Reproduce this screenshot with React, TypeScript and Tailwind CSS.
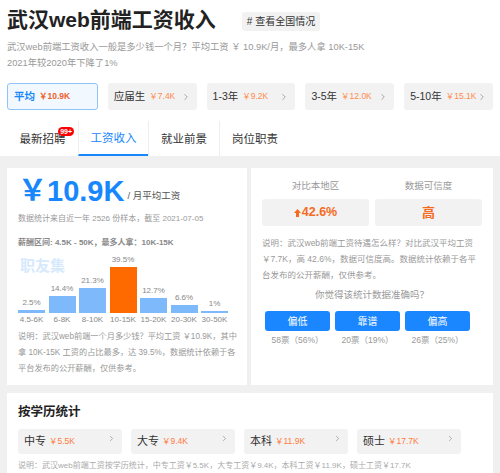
import { ChevronRight } from 'lucide-react';

const levels = [
  { name: '平均', pay: '￥10.9K', active: true },
  { name: '应届生', pay: '￥7.4K' },
  { name: '1-3年', pay: '￥9.2K' },
  { name: '3-5年', pay: '￥12.0K' },
  { name: '5-10年', pay: '￥15.1K' },
];

const bars = [
  { label: '4.5-6K', pct: 2.5 },
  { label: '6-8K', pct: 14.4 },
  { label: '8-10K', pct: 21.3 },
  { label: '10-15K', pct: 39.5, top: true },
  { label: '15-20K', pct: 12.7 },
  { label: '20-30K', pct: 6.6 },
  { label: '30-50K', pct: 1 },
];

const votes = [
  { text: '偏低', count: '58票（56%）' },
  { text: '靠谱', count: '20票（19%）' },
  { text: '偏高', count: '26票（25%）' },
];

const degrees = [
  { name: '中专', pay: '￥5.5K' },
  { name: '大专', pay: '￥9.4K' },
  { name: '本科', pay: '￥11.9K' },
  { name: '硕士', pay: '￥17.7K' },
];

export default function App() {
  return (
    <div className="w-[500px] h-[473px] overflow-hidden bg-[#f0f0f0] text-[#333] font-['Liberation_Sans','Noto_Sans_CJK_SC',sans-serif]">
      {/* Header */}
      <div className="bg-white px-[7px] pt-[5px]">
        <div className="flex items-center">
          <h1 className="text-[21px] leading-[30px] font-bold text-[#222]">武汉web前端工资收入</h1>
          <span className="ml-[26px] mt-[2px] bg-[#f2f2f2] rounded-[3px] px-[5px] h-[19px] leading-[19px] text-[10px] text-[#333]">
            # 查看全国情况
          </span>
        </div>
        <p className="mt-[4px] text-[9.3px] leading-[16px] text-[#999] whitespace-nowrap">
          武汉web前端工资收入一般是多少钱一个月？平均工资 ￥ 10.9K/月，最多人拿 10K-15K
        </p>
        <p className="text-[9.3px] leading-[16px] text-[#999]">2021年较2020年下降了1%</p>

        <div className="mt-[12px] flex gap-[10px]">
          {levels.map((l) => (
            <div
              key={l.name}
              className={`flex-1 h-[27px] rounded-[3px] flex items-center px-[6px] whitespace-nowrap ${
                l.active ? 'bg-[#f2f8ff] border border-[#8fc3fb]' : 'bg-[#f2f2f2]'
              }`}
            >
              <span className={`text-[10.5px] ${l.active ? 'text-[#1787fb] font-bold' : 'text-[#333]'}`}>{l.name}</span>
              <span className={`ml-[4px] text-[8.5px] ${l.active ? 'text-[#f0602a] font-bold' : 'text-[#ff8a4c]'}`}>{l.pay}</span>
              {!l.active && <ChevronRight className="ml-auto w-[10px] h-[10px] text-[#999]" />}
            </div>
          ))}
        </div>

        {/* Nav tabs */}
        <div className="mt-[11px] flex h-[35px]">
          <div className="relative w-[71px] flex items-center justify-center pt-[2px] text-[11.5px] text-[#333]">
            最新招聘
            <span className="absolute top-[6px] right-[4px] bg-[#f00] text-white text-[7px] leading-[9px] px-[2px] rounded-full font-bold">
              99+
            </span>
          </div>
          <div className="w-[70px] flex items-center justify-center pt-[2px] text-[11.5px] text-[#1787fb] border-l border-[#eee] border-b-2 border-b-[#1787fb]">
            工资收入
          </div>
          <div className="w-[71px] flex items-center justify-center pt-[2px] text-[11.5px] text-[#333] border-l border-[#eee]">
            就业前景
          </div>
          <div className="w-[71px] flex items-center justify-center pt-[2px] text-[11.5px] text-[#333] border-l border-[#eee]">
            岗位职责
          </div>
        </div>
      </div>

      {/* Salary section */}
      <div className="px-[7px] pt-[12px] flex gap-[4px]">
        <div className="w-[240px] bg-white pl-[11px] pr-[8px] pt-[7px] pb-[8px]">
          <div className="flex items-end">
            <span className="text-[29px] leading-[32px] font-bold text-[#1787fb]">￥10.9K</span>
            <span className="ml-[3px] mb-[4px] text-[9.5px] text-[#555]">/ 月平均工资</span>
          </div>
          <p className="mt-[5px] text-[8px] leading-[14px] text-[#999] whitespace-nowrap">数据统计来自近一年 2526 份样本，截至 2021-07-05</p>
          <p className="mt-[10px] text-[8px] leading-[14px] font-bold text-[#888] whitespace-nowrap">薪酬区间: 4.5K - 50K，最多人拿：10K-15K</p>

          <div className="relative mt-[4px]">
            <span className="absolute left-[2px] top-[3px] text-[15px] leading-[18px] font-bold text-[#d6e9fd]">职友集</span>
            <div className="flex gap-[3.5px] items-end">
              {bars.map((b) => (
                <div key={b.label} className="w-[27px] flex flex-col items-center">
                  <span className="text-[8px] leading-[11px] text-[#888] mb-[2px] whitespace-nowrap">{b.pct}%</span>
                  <div
                    className={`w-full ${b.top ? 'bg-[#ff6a00]' : 'bg-[#7db9fb]'}`}
                    style={{ height: Math.max(2, Math.round(b.pct * 1.17)) }}
                  />
                </div>
              ))}
            </div>
            <div className="flex gap-[3.5px] mt-[1px]">
              {bars.map((b) => (
                <span key={b.label} className="w-[27px] text-center text-[8px] leading-[12px] text-[#888] whitespace-nowrap">
                  {b.label}
                </span>
              ))}
            </div>
          </div>

          <p className="mt-[3px] text-[8.2px] leading-[16px] text-[#999]">
            说明：武汉web前端一个月多少钱？平均工资 ￥10.9K，其中拿 10K-15K 工资的占比最多，达 39.5%，数据统计依赖于各平台发布的公开薪酬，仅供参考。
          </p>
        </div>

        <div className="flex-1 bg-white px-[11px] pt-[11px]">
          <div className="flex gap-[6px]">
            <div className="flex-1">
              <p className="text-center text-[9.5px] leading-[14px] text-[#999]">对比本地区</p>
              <div className="mt-[6px] h-[27px] bg-[#f2f2f2] rounded-[3px] flex items-center justify-center text-[12.5px] font-bold text-[#f56a1e]">
                <svg width="7" height="8" viewBox="0 0 7 8" className="mr-[1px]">
                  <path d="M3.5 0 L7 4 L5 4 L5 8 L2 8 L2 4 L0 4 Z" fill="#f56a1e" />
                </svg>
                42.6%
              </div>
            </div>
            <div className="flex-1">
              <p className="text-center text-[9.5px] leading-[14px] text-[#999]">数据可信度</p>
              <div className="mt-[6px] h-[27px] bg-[#f2f2f2] rounded-[3px] flex items-center justify-center text-[13px] font-bold text-[#f56a1e]">
                高
              </div>
            </div>
          </div>
          <p className="mt-[9px] text-[8.5px] leading-[16px] text-[#999]">
            说明：武汉web前端工资待遇怎么样？对比武汉平均工资 ￥7.7K，高 42.6%，数据可信度高。数据统计依赖于各平台发布的公开薪酬，仅供参考。
          </p>
          <p className="mt-[5px] text-center text-[9.5px] leading-[14px] text-[#999]">你觉得该统计数据准确吗？</p>
          <div className="mt-[9px] pl-[3px] flex gap-[5px]">
            {votes.map((v) => (
              <div key={v.text} className="w-[65px] flex flex-col items-center">
                <div className="w-full h-[20px] rounded-[3px] bg-[#1a86ff] text-white text-[10px] flex items-center justify-center">
                  {v.text}
                </div>
                <span className="mt-[3px] text-[8.5px] leading-[13px] text-[#999] whitespace-nowrap">{v.count}</span>
              </div>
            ))}
          </div>
        </div>
      </div>

      {/* Degree section */}
      <div className="mx-[7px] mt-[8px] bg-white px-[11px] pt-[10px] pb-[12px]">
        <h2 className="text-[12.5px] leading-[18px] font-bold text-[#222]">按学历统计</h2>
        <div className="mt-[8px] flex gap-[9px]">
          {degrees.map((d) => (
            <div key={d.name} className="w-[104px] h-[25px] bg-[#f2f2f2] rounded-[3px] flex items-center px-[6px]">
              <span className="text-[11px] text-[#333]">{d.name}</span>
              <span className="ml-[3px] text-[8.5px] text-[#ff7a3d]">{d.pay}</span>
              <ChevronRight className="ml-auto mb-[6px] w-[9px] h-[9px] text-[#999]" />
            </div>
          ))}
        </div>
        <p className="mt-[5px] text-[8px] leading-[14px] text-[#aaa] whitespace-nowrap">
          说明：武汉web前端工资按学历统计，中专工资￥5.5K，大专工资￥9.4K，本科工资￥11.9K，硕士工资￥17.7K
        </p>
      </div>
    </div>
  );
}
